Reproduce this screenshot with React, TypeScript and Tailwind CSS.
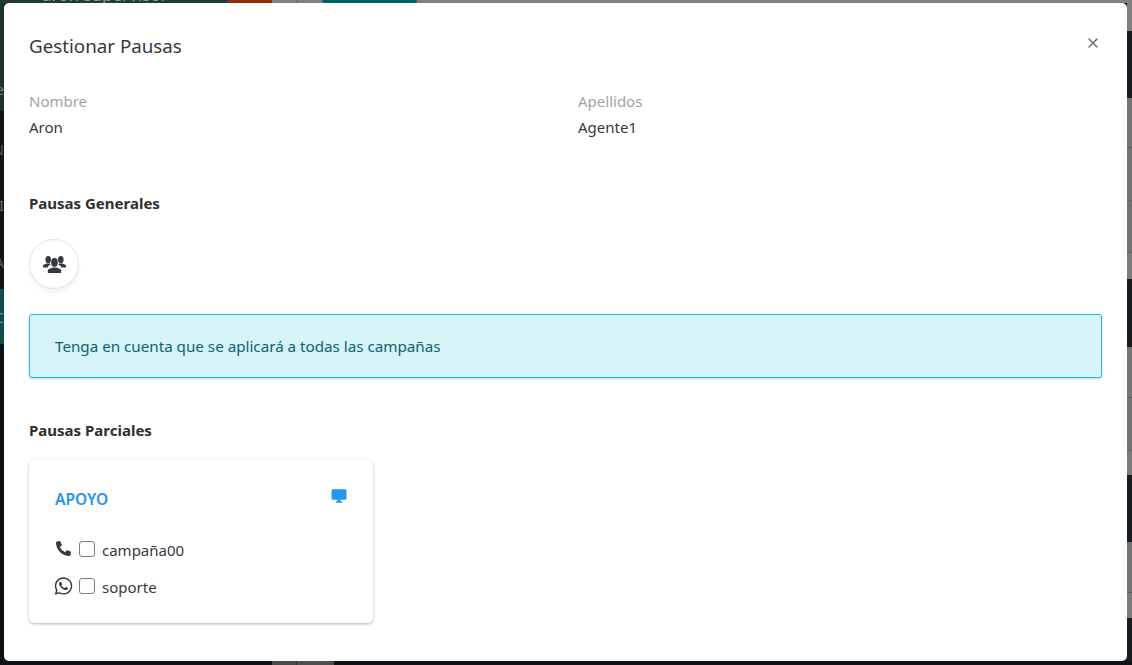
import React from 'react';
import { X } from 'lucide-react';
import { FaPhoneAlt, FaWhatsapp } from 'react-icons/fa';
import { MdDesktopWindows } from 'react-icons/md';

const campaigns = [
  { name: 'campaña00', icon: <FaPhoneAlt size={15} className="-translate-y-[2px]" /> },
  { name: 'soporte', icon: <FaWhatsapp size={20} className="-translate-y-[1px]" /> },
];

// page rows seen behind the modal, on the right edge
const rightStrip = [
  'h-[28px] bg-[#808080]',
  'h-[67px] bg-[#171c20]',
  'h-[50px] bg-[#757575] border-b border-[#5c5c5c]',
  'h-[53px] bg-[#727272] border-b border-[#6a6a6a]',
  'h-[52px] bg-[#717171] border-b border-[#666666]',
  'h-[26px] bg-[#7b7b7b]',
  'h-[68px] bg-[#171c20]',
  'h-[51px] bg-[#757575] border-b border-[#5c5c5c]',
  'h-[53px] bg-[#727272] border-b border-[#666666]',
  'h-[24px] bg-[#7b7b7b]',
  'h-[67px] bg-[#171c20]',
  'h-[51px] bg-[#757575] border-b border-[#5c5c5c]',
  'h-[25px] bg-[#7b7b7b]',
  'h-[50px] bg-[#171c20]',
];

const PeopleIcon = () => (
  <svg width="23" height="17" viewBox="0 0 23 17" fill="currentColor">
    <ellipse cx="5.2" cy="3.6" rx="2.8" ry="3.6" />
    <ellipse cx="17.8" cy="3.6" rx="2.8" ry="3.6" />
    <path d="M0 11.5V9.6c0-.9 2-1.6 3.6-2.2h3.2l.9 1.2c-1.3.6-2.6 1.3-2.8 2.9H0z" />
    <path d="M23 11.5V9.6c0-.9-2-1.6-3.6-2.2h-3.2l-.9 1.2c1.3.6 2.6 1.3 2.8 2.9H23z" />
    <ellipse cx="11.5" cy="6.5" rx="3.3" ry="4.4" />
    <path d="M4.8 17v-2.6c0-1 2.8-2 4.7-2.8h4c1.9.8 4.7 1.8 4.7 2.8V17H4.8z" />
  </svg>
);

const App: React.FC = () => {
  return (
    <div className="flex h-[665px] w-[1132px] flex-col overflow-hidden bg-[#0f1517] font-['Noto_Sans',sans-serif] text-[15px] text-[#343a40]">
      {/* page behind the modal, top edge */}
      <div className="flex h-[3px] overflow-hidden bg-[#808080]">
        <div className="flex w-[228px] items-end bg-[#263a3a] pl-[42px]">
          <span className="text-[17px] leading-none text-[#8e9a9a]">aron supervisor</span>
        </div>
        <div className="w-[44px] bg-[#8a3008]" />
        <div className="w-[25px] border-r border-[#707070]" />
        <div className="w-[25px]" />
        <div className="w-[95px] rounded-b-[4px] bg-[#00606c]" />
      </div>

      <div className="flex h-[658px]">
        <div className="relative w-[4px] overflow-hidden">
          <div className="h-[108px] bg-[#1c3030]" />
          <div className="h-[178px] bg-[#101618]" />
          <div className="h-[55px] bg-[#0e4d4d]" />
          <div className="h-[317px] bg-[#0c1214]" />
          <span className="absolute right-0 top-[75px] text-[15px] text-[#77807f]">e</span>
          <span className="absolute right-0 top-[135px] text-[15px] text-[#55595a]">N</span>
          <span className="absolute right-0 top-[191px] text-[15px] text-[#6a6e6f]">I</span>
          <span className="absolute right-0 top-[248px] text-[15px] text-[#555f77]">A</span>
          <span className="absolute right-0 top-[303px] text-[15px] text-[#7a8a8a]">C</span>
        </div>

        {/* Modal */}
        <div className="flex w-[1123px] flex-col rounded-[5px] bg-white px-[25px]">
          <header className="flex items-start justify-between pt-[29px]">
            <h2 className="text-[18.75px] leading-[28px] text-[#343a40]">Gestionar Pausas</h2>
            <button className="mr-[1px] mt-[3px] text-[#6b6b6b]" aria-label="Cerrar">
              <X size={16} />
            </button>
          </header>

          <div className="mt-[28px] grid grid-cols-2 gap-[25px]">
            <div>
              <p className="leading-[26px] text-[#a3a3a3]">Nombre</p>
              <p className="leading-[26px]">Aron</p>
            </div>
            <div>
              <p className="leading-[26px] text-[#a3a3a3]">Apellidos</p>
              <p className="leading-[26px]">Agente1</p>
            </div>
          </div>

          <h3 className="mt-[51px] text-[15px] font-bold leading-[24px] text-[#2f2f2f]">Pausas Generales</h3>

          <button className="mt-[24px] flex h-[50px] w-[50px] items-center justify-center rounded-full border border-[#e4e4e4] bg-white text-[#343a40] shadow-[0_4px_4px_rgba(0,0,0,0.05)]">
            <PeopleIcon />
          </button>

          <div className="mt-[25px] flex h-[64px] items-center rounded-[3px] border border-[#17c1d8] bg-[#d6f3f7] px-[25px] text-[15.2px] text-[#0b6470] shadow-[0_1px_2px_rgba(0,0,0,0.2)]">
            Tenga en cuenta que se aplicará a todas las campañas
          </div>

          <h3 className="mt-[40px] text-[15px] font-bold leading-[24px] text-[#2f2f2f]">Pausas Parciales</h3>

          <section className="mt-[18px] h-[163px] w-[344px] rounded-[5px] bg-white px-[25px] pt-[25px] shadow-[0_1px_3px_rgba(0,0,0,0.3)]">
            <div className="flex items-start justify-between">
              <span className="ml-[1px] mt-[3px] text-[15.5px] font-semibold text-[#2196f3]">APOYO</span>
              <MdDesktopWindows size={18} className="mt-[2px] text-[#2196f3]" />
            </div>
            <ul className="mt-[26px] flex flex-col gap-[11px]">
              {campaigns.map((c) => (
                <li key={c.name} className="flex h-[26px] items-center">
                  <span className="flex w-[19px] justify-center">{c.icon}</span>
                  <input type="checkbox" className="ml-[6px] h-[16px] w-[16px] -translate-y-[1px] appearance-none rounded-[3px] border border-[#7d7d7d] bg-white" />
                  <span className="ml-[7px] text-[15px]">{c.name}</span>
                </li>
              ))}
            </ul>
          </section>
        </div>

        <div className="w-[5px] overflow-hidden">
          {rightStrip.map((row, i) => (
            <div key={i} className={row} />
          ))}
        </div>
      </div>

      {/* page behind the modal, bottom edge */}
      <div className="flex h-[4px] bg-[#0f1517]">
        <div className="ml-[272px] w-[25px] border-r border-[#333333] bg-[#4a4a4a]" />
        <div className="w-[37px] bg-[#4f4f4f]" />
      </div>
    </div>
  );
};

export default App;
